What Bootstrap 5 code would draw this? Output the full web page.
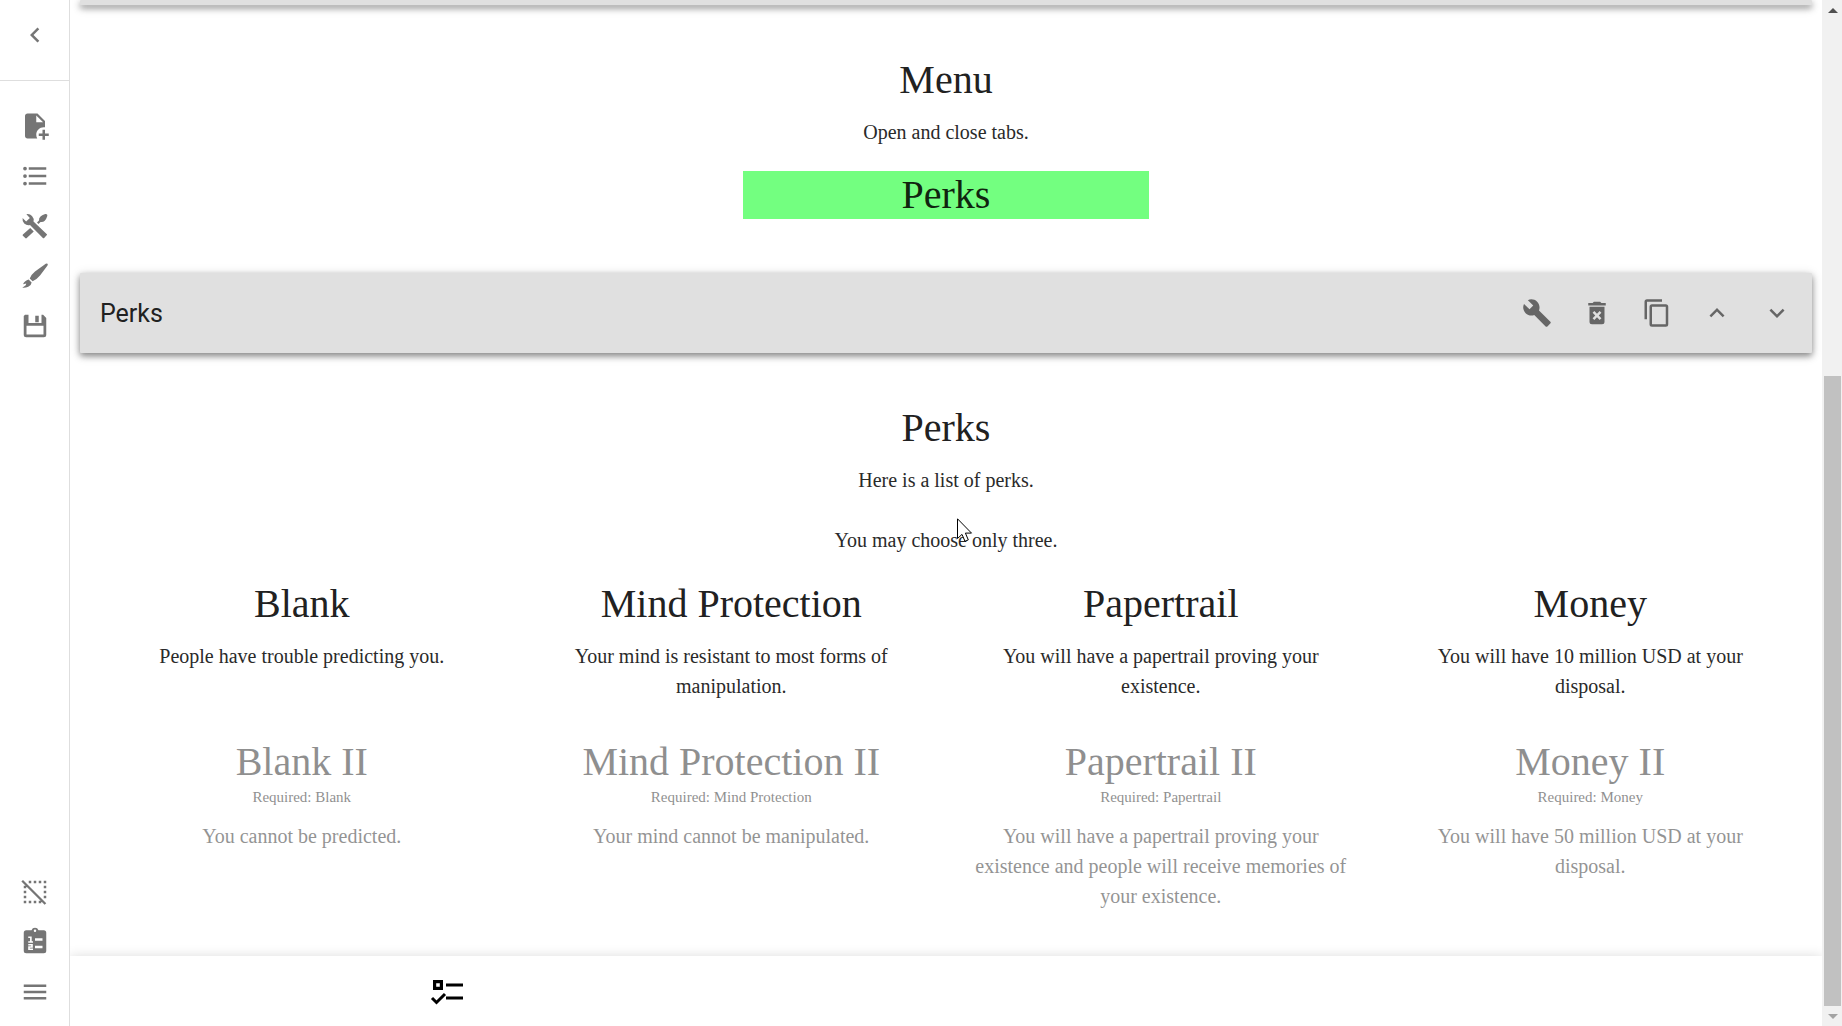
<!DOCTYPE html>
<html lang="en">
<head>
<meta charset="utf-8">
<meta name="viewport" content="width=device-width, initial-scale=1">
<title>Perks</title>
<link href="https://cdn.jsdelivr.net/npm/bootstrap@5.3.0/dist/css/bootstrap.min.css" rel="stylesheet">
<style>
  body { font-family: Roboto, sans-serif; color: #212121; background: #fff; }
  .side-nav { width: 70px; border-right: 1px solid #dedede; color: #757575; }
  .side-head { height: 81px; padding-top: 10px; border-bottom: 1px solid #dedede; }
  .side-tools { padding-top: 20px; }
  .side-foot { padding-bottom: 9px; }
  .icon-btn { width: 60px; height: 50px; padding: 0; border: 0; background: none; color: inherit;
    display: flex; align-items: center; justify-content: center; }
  .icon-btn svg { width: 30px; height: 30px; fill: currentColor; }
  .row-bar { height: 80px; margin: 0 10px; padding: 0 5px 0 20px; background: #e0e0e0; color: #666;
    border-radius: 1px; box-shadow: 0 3px 6px rgba(0,0,0,.4), 0 2px 12px rgba(0,0,0,.16); }
  .row-bar.bar-end { height: 5px; }
  .row-bar h1 { font-size: 25px; line-height: 40px; padding-top: 2px; font-weight: 400; color: #212121; }
  .story { font-family: "Liberation Serif", serif; text-align: center; padding: 51px 17px 0; }
  .story h2 { font-size: 40px; line-height: 48px; font-weight: 400; margin: 0; }
  .story p { font-size: 20px; line-height: 30px; margin: 13px 0 0; color: #2a2a2a; }
  .story .need { font-size: 15px; line-height: 22px; }
  .story .row { --bs-gutter-x: 24px; margin: 0; }
  .story .choice { padding-left: 26px; padding-right: 26px; }
  .locked { opacity: .5; }
  .tab-row { padding: 24px 0 54px; }
  .tab-btn { font-size: 40px; line-height: 48px; padding: 0; border: 0; background: #73ff80; color: #10240f; width: 100%; display: block; }
  .picks { padding-top: 25px; row-gap: 37px; }
  .pointer { left: calc(50% + 11px); top: 53px; }
  .foot-bar { height: 70px; background: #fff; box-shadow: 0 1px 12px rgba(0,0,0,.16); z-index: 2; clip-path: inset(-14px 0 0 0); }
  .foot-slot { width: 43%; padding-top: 2px; }
  .foot-bar button { width: 60px; height: 60px; padding: 0; border: 0; background: none; }
  .scroll-rail { width: 20px; background: #f1f1f1; padding: 0 1px 0 2px; }
  .rail-cap { height: 20px; }
  .rail-gap { flex: 356 0 0; }
  .rail-thumb { flex: 630 0 0; background: #c1c1c1; }
</style>
</head>
<body>
<div class="d-flex vh-100 overflow-hidden">

  <nav class="side-nav d-flex flex-column flex-shrink-0 align-items-center" aria-label="Tools">
    <div class="side-head w-100 d-flex justify-content-center">
      <button class="icon-btn" aria-label="Collapse"><svg viewBox="0 0 24 24"><path d="M15.41,16.58L10.83,12L15.41,7.41L14,6L8,12L14,18Z"/></svg></button>
    </div>
    <div class="side-tools">
      <button class="icon-btn" aria-label="Add row"><svg viewBox="0 0 24 24"><path d="M14,2H6C4.89,2 4,2.89 4,4V20C4,21.11 4.89,22 6,22H13.81C13.28,21.09 13,20.05 13,19C13,15.69 15.69,13 19,13C19.34,13 19.67,13.03 20,13.08V8L14,2M13,9V3.5L18.5,9H13M23,20H20V23H18V20H15V18H18V15H20V18H23V20Z"/></svg></button>
      <button class="icon-btn" aria-label="Row list"><svg viewBox="0 0 24 24"><path d="M7,5H21V7H7V5M7,13V11H21V13H7M4,4.5A1.5,1.5 0 0,1 5.5,6A1.5,1.5 0 0,1 4,7.5A1.5,1.5 0 0,1 2.5,6A1.5,1.5 0 0,1 4,4.5M4,10.5A1.5,1.5 0 0,1 5.5,12A1.5,1.5 0 0,1 4,13.5A1.5,1.5 0 0,1 2.5,12A1.5,1.5 0 0,1 4,10.5M7,19V17H21V19H7M4,16.5A1.5,1.5 0 0,1 5.5,18A1.5,1.5 0 0,1 4,19.5A1.5,1.5 0 0,1 2.5,18A1.5,1.5 0 0,1 4,16.5Z"/></svg></button>
      <button class="icon-btn" aria-label="Settings"><svg viewBox="0 0 24 24"><path d="M21.5,19.2L19.3,21.5Q18.8,22 18.3,21.5L8,11.2Q5.4,11.8 3.4,9.9Q1.6,8 2.1,5.6L4.9,8.4L7.9,5.5L5.1,2.6Q7.7,2 9.6,4Q11.4,5.9 10.8,8.4L21.5,18.5Q21.8,18.9 21.5,19.2Z"/><path d="M8.2,13.5L11,16.3L5.4,21.6Q4.8,22.2 4.2,21.6L2.3,19.7Q1.8,19.2 2.3,18.7ZM13.6,9.2L15.2,7.6Q14.9,5.6 16.6,4.2Q18,3 20.2,2.4Q21.3,2.2 21.8,2.9Q22,3.6 21.6,4.6Q21,6.6 19.8,7.8Q18.4,9.2 16.4,8.8L14.8,10.4Z"/></svg></button>
      <button class="icon-btn" aria-label="Design"><svg viewBox="0 0 24 24"><path d="M20.6,2.2Q21.4,1.6 22,2.2Q22.5,2.8 22,3.6L16,11.6Q13.6,14.6 10.1,16.2L7.8,13.9Q9.2,10.6 12,8.4ZM6.9,14.7L9.3,17.1Q8.9,19.8 6.6,20.6Q4,21.7 1.8,21.3L4.6,19.4L5,18L2.4,18.6Q3.8,15.4 6.9,14.7Z"/></svg></button>
      <button class="icon-btn" aria-label="Save"><svg viewBox="0 0 24 24"><path fill-rule="evenodd" d="M4,3H6.8V9.5H17.2V3H18.5L21,5.5V19A2,2 0 0 1 19,21H5A2,2 0 0 1 3,19V4ZM5.2,11.8V18.8H18.8V11.8ZM12.2,3.8H15V9H12.2Z"/></svg></button>
    </div>
    <div class="side-foot mt-auto">
      <button class="icon-btn" aria-label="Clear selection"><svg viewBox="0 0 24 24"><path d="M7,3h2v2H7zM11,3h2v2h-2zM15,3h2v2h-2zM19,3h2v2h-2zM19,7h2v2h-2zM19,11h2v2h-2zM19,15h2v2h-2zM3,7h2v2H3zM3,11h2v2H3zM3,15h2v2H3zM3,19h2v2H3zM7,19h2v2H7zM11,19h2v2h-2zM15,19h2v2h-2zM1.1,3.6L2.4,2.3L21,20.9L19.7,22.2Z"/></svg></button>
      <button class="icon-btn" aria-label="Score list"><svg viewBox="0 0 24 24"><path fill-rule="evenodd" d="M5,2.5H9.2A3,3 0 0 1 14.8,2.5H19A2,2 0 0 1 21,4.5V19A2,2 0 0 1 19,21H5A2,2 0 0 1 3,19V4.5A2,2 0 0 1 5,2.5ZM12,2A1,1 0 1 0 12,4A1,1 0 1 0 12,2ZM12,9V11H18V9ZM12,15V17H18V15Z"/><path d="M6.6,8.2H8.7V11.9M6.6,12H10.4M6.6,14.2H9.6V16H7.2V17.8H10.4" fill="none" stroke="#fff" stroke-width="1.3"/></svg></button>
      <button class="icon-btn" aria-label="Menu"><svg viewBox="0 0 24 24"><path d="M3,6H21V8H3ZM3,11H21V13H3ZM3,16H21V18H3Z"/></svg></button>
    </div>
  </nav>

  <div class="d-flex flex-column flex-grow-1 overflow-hidden">
    <main class="flex-grow-1 overflow-hidden">
      <div class="row-bar bar-end"></div>

      <section class="story">
        <h2>Menu</h2>
        <p>Open and close tabs.</p>
        <div class="row justify-content-center tab-row">
          <div class="col-3"><button class="tab-btn">Perks</button></div>
        </div>
      </section>

      <header class="row-bar d-flex align-items-center">
        <h1 class="m-0 me-auto">Perks</h1>
        <button class="icon-btn" aria-label="Edit"><svg viewBox="0 0 24 24"><path d="M22.7,19L13.6,9.9C14.5,7.6 14,4.9 12.1,3C10.1,1 7.1,0.6 4.7,1.7L9,6L6,9L1.6,4.7C0.4,7.1 0.9,10.1 2.9,12.1C4.8,14 7.5,14.5 9.8,13.6L18.9,22.7C19.3,23.1 19.9,23.1 20.3,22.7L22.6,20.4C23.1,20 23.1,19.3 22.7,19Z"/></svg></button>
        <button class="icon-btn" aria-label="Delete"><svg viewBox="0 0 24 24"><path d="M6,19A2,2 0 0,0 8,21H16A2,2 0 0,0 18,19V7H6V19M8.46,11.88L9.87,10.47L12,12.59L14.12,10.47L15.53,11.88L13.41,14L15.53,16.12L14.12,17.53L12,15.41L9.88,17.53L8.47,16.12L10.59,14L8.46,11.88M15.5,4L14.5,3H9.5L8.5,4H5V6H19V4H15.5Z"/></svg></button>
        <button class="icon-btn" aria-label="Duplicate"><svg viewBox="0 0 24 24"><path d="M19,21H8V7H19M19,5H8A2,2 0 0,0 6,7V21A2,2 0 0,0 8,23H19A2,2 0 0,0 21,21V7A2,2 0 0,0 19,5M16,1H4A2,2 0 0,0 2,3V17H4V3H16V1Z"/></svg></button>
        <button class="icon-btn" aria-label="Move up"><svg viewBox="0 0 24 24"><path d="M7.41,15.41L12,10.83L16.59,15.41L18,14L12,8L6,14Z"/></svg></button>
        <button class="icon-btn" aria-label="Move down"><svg viewBox="0 0 24 24"><path d="M7.41,8.58L12,13.17L16.59,8.58L18,10L12,16L6,10Z"/></svg></button>
      </header>

      <section class="story">
        <h2>Perks</h2>
        <p class="position-relative">Here is a list of perks.<br><br>You may choose only three.
          <svg class="pointer position-absolute" width="17" height="25" viewBox="0 0 17 25" aria-hidden="true"><path d="M.5.8V20.5L5,16.4L8,23.3L11.3,21.9L8.4,15.1H14.5Z" fill="#fff" stroke="#000"/></svg>
        </p>
        <div class="row picks">
          <div class="col-3 choice"><h2>Blank</h2><p>People have trouble predicting you.</p></div>
          <div class="col-3 choice"><h2>Mind Protection</h2><p>Your mind is resistant to most forms of manipulation.</p></div>
          <div class="col-3 choice"><h2>Papertrail</h2><p>You will have a papertrail proving your existence.</p></div>
          <div class="col-3 choice"><h2>Money</h2><p>You will have 10 million USD at your disposal.</p></div>
          <div class="col-3 choice locked"><h2>Blank II</h2><div class="need">Required: Blank</div><p>You cannot be predicted.</p></div>
          <div class="col-3 choice locked"><h2>Mind Protection II</h2><div class="need">Required: Mind Protection</div><p>Your mind cannot be manipulated.</p></div>
          <div class="col-3 choice locked"><h2>Papertrail II</h2><div class="need">Required: Papertrail</div><p>You will have a papertrail proving your existence and people will receive memories of your existence.</p></div>
          <div class="col-3 choice locked"><h2>Money II</h2><div class="need">Required: Money</div><p>You will have 50 million USD at your disposal.</p></div>
        </div>
      </section>
    </main>

    <footer class="foot-bar position-relative flex-shrink-0">
      <div class="foot-slot h-100 d-flex align-items-center justify-content-center">
        <button aria-label="Selected choices"><svg width="36" height="36" viewBox="0 0 36 36"><path fill-rule="evenodd" d="M4,6H14V16H4ZM7.2,9.2V12.8H10.8V9.2Z"/><path d="M17,9.5H34V12.5H17ZM17,22.5H34V25.5H17Z"/><path d="M3,24L7.5,28.5L16,20" fill="none" stroke="#000" stroke-width="3"/></svg></button>
      </div>
    </footer>
  </div>

  <div class="scroll-rail d-flex flex-column flex-shrink-0" aria-hidden="true">
    <div class="rail-cap d-flex align-items-center justify-content-center"><svg width="10" height="5" viewBox="0 0 10 5"><path d="M0,5L5,0L10,5Z" fill="#505050"/></svg></div>
    <div class="rail-gap"></div>
    <div class="rail-thumb"></div>
    <div class="rail-cap d-flex align-items-center justify-content-center"><svg width="10" height="5" viewBox="0 0 10 5"><path d="M0,0L5,5L10,0Z" fill="#a3a3a3"/></svg></div>
  </div>
</div>
<script src="https://cdn.jsdelivr.net/npm/bootstrap@5.3.0/dist/js/bootstrap.bundle.min.js"></script>
</body>
</html>
